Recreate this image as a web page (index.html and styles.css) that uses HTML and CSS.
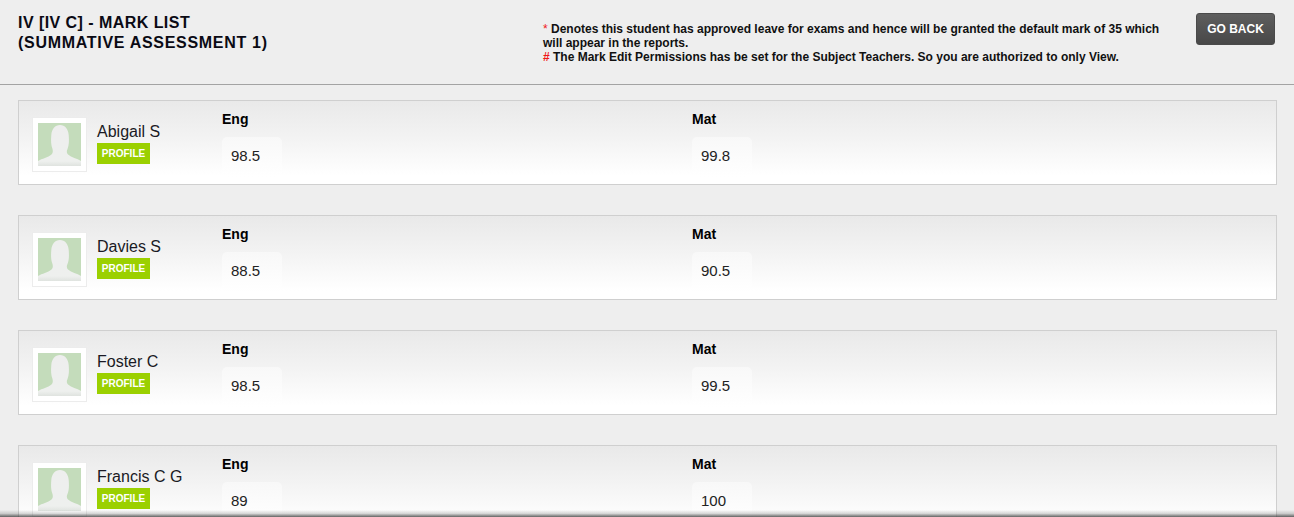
FILE: index.html
```html
<!DOCTYPE html>
<html lang="en">
<head>
<meta charset="utf-8">
<title>Mark List</title>
<link rel="stylesheet" href="styles.css">
</head>
<body>
<svg class="defs" aria-hidden="true"><defs>
  <linearGradient id="sil-fill" x1="0" y1="0" x2="0" y2="1"><stop offset="0" stop-color="#eeeeee"/><stop offset="0.88" stop-color="#eef0ee"/><stop offset="1" stop-color="#dfe3df"/></linearGradient>
  <symbol id="person" viewBox="0 0 43 43">
    <rect width="43" height="43" fill="#c4dcbb"/>
    <path d="M0 43V38C4 35.500 10 34.500 13.500 31.500C15 30 15 28 14.500 26C13 22 12.800 18 13.300 12C13.800 6 17 2 22 2C27 2 30.200 6 30.700 12C31.200 18 31 22 29.500 26C28.500 28 28.500 30 30 31.500C33.500 34.500 39 35.500 43 38V43Z" fill="url(#sil-fill)"/>
  </symbol>
</defs></svg>
<header class="top">
  <h1 class="title"><span class="title-a">IV [IV C] - MARK LIST</span><br><span class="title-b">(SUMMATIVE ASSESSMENT 1)</span></h1>
  <div class="notes">
    <span class="star">*</span> Denotes this student has approved leave for exams and hence will be granted the default mark of 35 which will appear in the reports.<br>
    <span class="hash">#</span> The Mark Edit Permissions has be set for the Subject Teachers. So you are authorized to only View.
  </div>
  <a class="back">GO BACK</a>
</header>
<main class="list">
  <section class="card">
    <div class="avatar"><svg class="sil"><use href="#person"/></svg></div>
    <div class="who"><div class="name">Abigail S</div><a class="profile">PROFILE</a></div>
    <div class="marks">
      <div class="mark"><div class="subject">Eng</div><div class="value">98.5</div></div>
      <div class="mark"><div class="subject">Mat</div><div class="value">99.8</div></div>
    </div>
  </section>
  <section class="card">
    <div class="avatar"><svg class="sil"><use href="#person"/></svg></div>
    <div class="who"><div class="name">Davies S</div><a class="profile">PROFILE</a></div>
    <div class="marks">
      <div class="mark"><div class="subject">Eng</div><div class="value">88.5</div></div>
      <div class="mark"><div class="subject">Mat</div><div class="value">90.5</div></div>
    </div>
  </section>
  <section class="card">
    <div class="avatar"><svg class="sil"><use href="#person"/></svg></div>
    <div class="who"><div class="name">Foster C</div><a class="profile">PROFILE</a></div>
    <div class="marks">
      <div class="mark"><div class="subject">Eng</div><div class="value">98.5</div></div>
      <div class="mark"><div class="subject">Mat</div><div class="value">99.5</div></div>
    </div>
  </section>
  <section class="card">
    <div class="avatar"><svg class="sil"><use href="#person"/></svg></div>
    <div class="who"><div class="name">Francis C G</div><a class="profile">PROFILE</a></div>
    <div class="marks">
      <div class="mark"><div class="subject">Eng</div><div class="value">89</div></div>
      <div class="mark"><div class="subject">Mat</div><div class="value">100</div></div>
    </div>
  </section>
</main>
<div class="bottom-shade"></div>
</body>
</html>
```
FILE: styles.css
```css
* { box-sizing: border-box; }
html, body { height: 100%; }
body {
  margin: 0;
  height: 517px;
  overflow: hidden;
  background: #eeeeee;
  color: #000;
  font-family: "Liberation Sans", Arial, sans-serif;
}
.defs { display: block; width: 0; height: 0; }
.top {
  display: flex;
  align-items: flex-start;
  height: 85px;
  padding: 13px 19px 0 18px;
  border-bottom: 1px solid #a3a3a3;
}
.title {
  margin: 0;
  width: 525px;
  flex: none;
  font-size: 16px;
  line-height: 20px;
  font-weight: bold;
  color: #0a0a14;
}
.title-a { letter-spacing: 0.45px; }
.title-b { letter-spacing: 0.7px; }
.notes {
  flex: none;
  width: 633px;
  margin-top: 9px;
  margin-right: 20px;
  font-size: 12px;
  line-height: 14px;
  font-weight: bold;
  color: #111;
}
.star { color: #f01818; font-weight: normal; }
.hash { color: #f01818; }
.back {
  flex: none;
  width: 79px;
  height: 32px;
  border: 1px solid #4a4a4a;
  border-radius: 3px;
  background: linear-gradient(#5e5e5e, #484848);
  color: #fff;
  font-size: 12px;
  font-weight: bold;
  line-height: 30px;
  text-align: center;
}
.list {
  display: flex;
  flex-direction: column;
  gap: 30px;
  padding: 15px 17px 0 18px;
}
.card {
  flex: none;
  display: flex;
  height: 85px;
  padding: 16px 13px 0;
  border: 1px solid #cfcfcf;
  background: linear-gradient(#e9e9e9, #f3f3f3 45%, #fff 90%);
}
.avatar {
  flex: none;
  width: 55px;
  height: 55px;
  padding: 5px;
  background: #fff;
  border: 1px solid #ececec;
}
.sil { display: block; width: 43px; height: 43px; }
.who {
  flex: none;
  width: 135px;
  padding: 5px 0 0 10px;
}
.name {
  font-size: 16px;
  line-height: 20px;
  color: #1a1a24;
}
.profile {
  display: block;
  width: 53px;
  height: 21px;
  margin-top: 1px;
  background: #9bd000;
  color: #fff;
  font-size: 10px;
  font-weight: bold;
  line-height: 21px;
  text-align: center;
}
.marks { display: flex; }
.mark { width: 470px; }
.subject {
  margin-top: -6px;
  font-size: 14px;
  line-height: 16px;
  font-weight: bold;
}
.value {
  width: 60px;
  height: 40px;
  margin-top: 10px;
  padding: 11px 0 0 9px;
  border-radius: 5px;
  background: linear-gradient(#f8f8f8, #fff);
  font-size: 15px;
  line-height: 16px;
  color: #222;
}
.bottom-shade {
  position: fixed;
  left: 0;
  right: 0;
  bottom: 0;
  height: 7px;
  background: linear-gradient(rgba(60,60,60,0), rgba(60,60,60,0.2) 50%, rgba(60,60,60,0.8));
}
```
